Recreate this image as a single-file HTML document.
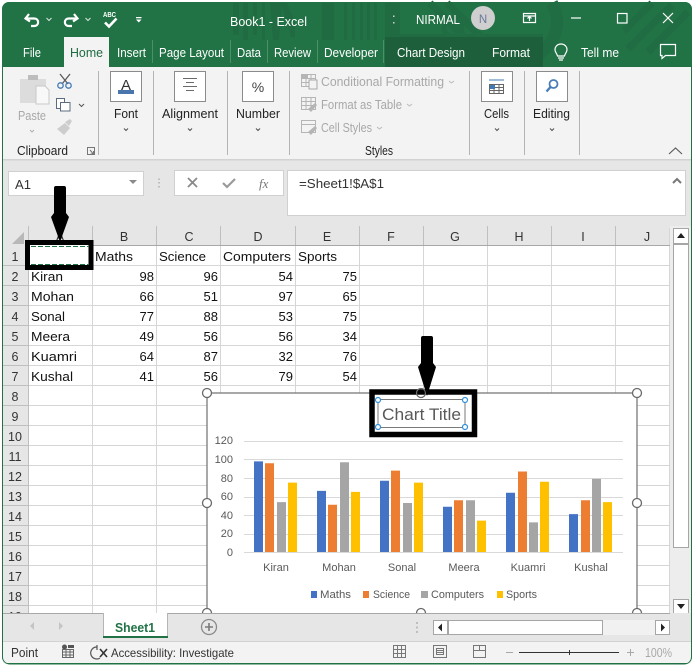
<!DOCTYPE html>
<html><head><meta charset="utf-8"><title>Book1 - Excel</title>
<style>
html,body{margin:0;padding:0;background:#fff;width:694px;height:668px;overflow:hidden}
svg{display:block}
text{font-family:"Liberation Sans",sans-serif;font-size:12.5px;fill:#222}
.w{fill:#fff;font-size:12.5px}
.dim{fill:#a8a8a8}
.c{font-size:13px;fill:#111}
.r{font-size:13px;fill:#111;text-anchor:end}
.h{font-size:12.5px;fill:#333;text-anchor:middle}
.ax{font-size:11px;fill:#595959;text-anchor:end}
.cat{font-size:11px;fill:#595959;text-anchor:middle}
.lg{font-size:11px;fill:#595959}
</style></head><body>
<svg width="694" height="668" viewBox="0 0 694 668" xmlns="http://www.w3.org/2000/svg">
<rect width="694" height="668" fill="#fff"/>
<!-- window -->
<rect x="2.500" y="2.500" width="689" height="661" rx="7" fill="#e6e6e6" stroke="#217346" stroke-width="1"/>
<path d="M2 67V9a7 7 0 0 1 7-7H685a7 7 0 0 1 7 7V67Z" fill="#217346"/>
<!-- title pattern -->
<g fill="#206b42">
<path d="M233 3h6v32h-6zM243 3h5v37h-5zM253 3h4v32h-4zM262 3h3v37h-3zM270 3h12l-3 37h-6zM322 3h12v37h-12zM344 3h3v37h-3zM352 3h3v37h-3zM360 3h3v37h-3zM367 3h3v37h-3zM374 3h3v37h-3zM281 3h6l8 20v14h-4z"/>
<path d="M385 3h15v34h-15zM400 34h143v3H400z"/>
</g>
<g fill="none" stroke="#206c43">
<circle cx="453" cy="28" r="9" stroke-width="5"/>
<path d="M552 3c16 30-8 60-48 62" stroke-width="12"/>
<path d="M430 3l60 60M447 3l60 60" stroke-width="7"/>
<path d="M672 5l-44 44M688 12l-40 40M652 3l-28 28" stroke-width="7"/>
</g>
<path d="M385 37h158v30H385z" fill="#1e5f3b"/>
<!-- QAT -->
<g fill="none" stroke="#fff" stroke-width="2.200">
<path d="M29 14l-3.500 4.500 4.500 3M26.500 18.500H34c5.500 0 5.500 7.500 0 7.500h-3"/>
<path d="M74 14l3.500 4.500-4.500 3M76.500 18.500H69c-5.500 0-5.500 7.500 0 7.500h3"/>
<path d="M105 22.500l4 4 7.500-8" stroke-width="2.600"/>
</g>
<g fill="none" stroke="#d9e6de" stroke-width="1"><path d="M46.500 18l2.500 2.500 2.500-2.500M85.500 18l2.500 2.500 2.500-2.500"/></g>
<text x="103" y="17" style="font-size:7.500px;font-weight:bold;fill:#fff" textLength="13" lengthAdjust="spacingAndGlyphs">ABC</text>
<path d="M136 17h5.500v1.200H136zM136 19.500h5.500l-2.750 3z" fill="#fff"/>
<text class="w" x="230" y="26" textLength="77" lengthAdjust="spacingAndGlyphs" style="font-size:13px">Book1 - Excel</text>
<path d="M393 15.500h1.500v1.500h-1.500zM393 22h1.500v1.500h-1.500z" fill="#cfcfcf"/>
<text class="w" x="416" y="24" textLength="44" lengthAdjust="spacingAndGlyphs" style="font-size:12.500px">NIRMAL</text>
<circle cx="483" cy="18" r="12" fill="#cfcfcf"/>
<text x="483" y="23" style="font-size:11.500px;fill:#6a7a9a;text-anchor:middle">N</text>
<g fill="none" stroke="#fff" stroke-width="1.200">
<path d="M523.500 13.500h12v9h-12zM523.500 16h12M529.500 21v-4M527.500 18.500l2-2 2 2"/>
<path d="M571 18h10"/>
<rect x="617.500" y="13.500" width="9.500" height="9.500"/>
<path d="M663 13l10 10M673 13l-10 10"/>
<path d="M561 44c-3.500 0-6 2.500-6 5.800 0 2.500 2 3.500 2.500 6.200h7c.5-2.700 2.500-3.700 2.500-6.200 0-3.300-2.500-5.800-6-5.800zM558 58h6M559 60h4"/>
<path d="M660.500 44.500h15v11h-10l-3.500 3v-3h-1.500z"/>
</g>
<!-- Tabs -->
<path d="M64 37h45v31H64z" fill="#f3f3f3"/>
<text class="w" x="23" y="57" textLength="18" lengthAdjust="spacingAndGlyphs">File</text>
<text x="70" y="57" textLength="33" lengthAdjust="spacingAndGlyphs" style="fill:#1e6b41;font-size:12.500px">Home</text>
<text class="w" x="117" y="57" textLength="29" lengthAdjust="spacingAndGlyphs">Insert</text>
<text class="w" x="159" y="57" textLength="65" lengthAdjust="spacingAndGlyphs">Page Layout</text>
<text class="w" x="237" y="57" textLength="24" lengthAdjust="spacingAndGlyphs">Data</text>
<text class="w" x="274" y="57" textLength="37" lengthAdjust="spacingAndGlyphs">Review</text>
<text class="w" x="324" y="57" textLength="54" lengthAdjust="spacingAndGlyphs">Developer</text>
<text class="w" x="397" y="57" textLength="68" lengthAdjust="spacingAndGlyphs">Chart Design</text>
<text class="w" x="492" y="57" textLength="38" lengthAdjust="spacingAndGlyphs">Format</text>
<text class="w" x="581" y="57" textLength="38" lengthAdjust="spacingAndGlyphs">Tell me</text>
<path d="M152.500 40v23M230.500 40v23M267.500 40v23M317.500 40v23M383.500 40v23" stroke="#4a9069" fill="none"/>
<!-- Ribbon -->
<rect x="3" y="67" width="688" height="92" fill="#f3f3f3"/>
<rect x="3" y="159" width="688" height="1.500" fill="#d2d2d2"/>
<path d="M98.500 71v84M153.500 71v84M227.500 71v84M289.500 71v84M469.500 71v84M524.500 71v84M579.500 71v84" stroke="#b4b4b4" fill="none"/>
<!-- clipboard -->
<path d="M20 79h26v24H20z" fill="#dcdcdc"/><path d="M28 75h10v5H28z" fill="#bdbdbd"/>
<path d="M36 86h9l4 4v14H36z" fill="#f8f8f8" stroke="#c8c8c8"/>
<g fill="none" stroke="#5b5b5b" stroke-width="1.300"><path d="M60 74l8 10M70 74l-8 10"/></g>
<g fill="none" stroke="#3f78b5" stroke-width="1.300"><circle cx="60.500" cy="85.500" r="2.700"/><circle cx="68.500" cy="85.500" r="2.700"/></g>
<g fill="#fff" stroke="#5c6c80"><path d="M56.500 98.500h8v10h-8z"/><path d="M60.500 102.500h9.500v8.500h-9.500z"/></g>
<path d="M79 104l2.500 2.500 2.500-2.500" fill="none" stroke="#555"/>
<path d="M57 129l8-6 5 5-6 7zM65 122l5-3 2 2-3 5z" fill="#cdcdcd"/>
<text class="dim" x="18" y="120" textLength="28" lengthAdjust="spacingAndGlyphs">Paste</text>
<path d="M30 130l2 2 2-2" fill="none" stroke="#b0b0b0"/>
<text x="17" y="155" textLength="51" lengthAdjust="spacingAndGlyphs">Clipboard</text>
<path d="M87.500 147.500h7v7h-7zM90 150l3 3.500M93.500 151v3h-3" fill="none" stroke="#777"/>
<!-- group buttons -->
<g fill="#fff" stroke="#8c8c8c"><rect x="110.500" y="71.500" width="31" height="30"/><rect x="174.500" y="71.500" width="31" height="30"/><rect x="242.500" y="71.500" width="31" height="30"/><rect x="481.500" y="71.500" width="31" height="30"/><rect x="536.500" y="71.500" width="31" height="30"/></g>
<text x="126" y="90" style="font-size:15px;text-anchor:middle;fill:#333">A</text>
<rect x="118" y="90" width="16" height="4" fill="#4a75ad"/>
<path d="M183 81.500h14M186 85.500h8M183 89.500h14M186 93.500h8" stroke="#6a6a6a" fill="none" transform="translate(0 -3)"/>
<text x="258" y="92" style="font-size:14px;text-anchor:middle;fill:#444">%</text>
<g fill="none" stroke="#666"><path d="M489.500 84.500h14v9h-14zM489.500 87.500h14M489.500 90.500h14M494 84.500v9M499 84.500v9"/><path d="M489 80h15" stroke="#3f78b5"/></g>
<rect x="490" y="85" width="5" height="4" fill="#3f78b5"/>
<circle cx="553.500" cy="84" r="4" fill="#fff" stroke="#4a7db8" stroke-width="1.800"/>
<path d="M550.500 87l-4 4.500" stroke="#4a7db8" stroke-width="2.400" fill="none"/>
<text x="114" y="118" textLength="24" lengthAdjust="spacingAndGlyphs">Font</text>
<text x="162" y="118" textLength="56" lengthAdjust="spacingAndGlyphs">Alignment</text>
<text x="236" y="118" textLength="44" lengthAdjust="spacingAndGlyphs">Number</text>
<text x="484" y="118" textLength="25" lengthAdjust="spacingAndGlyphs">Cells</text>
<text x="533" y="118" textLength="37" lengthAdjust="spacingAndGlyphs">Editing</text>
<path d="M124 128.500l2 2 2-2M188 128.500l2 2 2-2M256 128.500l2 2 2-2M495 128.500l2 2 2-2M550 128.500l2 2 2-2" fill="none" stroke="#555" stroke-width="1.100"/>
<!-- styles -->
<g fill="none" stroke="#b5b5b5">
<path d="M301.500 74.500h14v12h-14zM301.500 78.500h14M301.500 82.500h14M306 74.500v12M311 74.500v12"/>
<path d="M301.500 97.500h14v12h-14zM301.500 101.500h14M301.500 105.500h14M306 97.500v12M311 97.500v12"/>
<path d="M301.500 120.500h14v12h-14zM301.500 124.500h14"/>
</g>
<path d="M301 74h7v5h-7z" fill="#b5b5b5"/><path d="M309 80h8v9h-8z" fill="#f3f3f3" stroke="#a8a8a8"/>
<path d="M308 109l7-6 2 2-6 7zM308 132l7-6 2 2-6 7z" fill="#b5b5b5"/>
<text class="dim" x="321" y="86" textLength="123" lengthAdjust="spacingAndGlyphs">Conditional Formatting</text>
<text class="dim" x="321" y="109" textLength="81" lengthAdjust="spacingAndGlyphs">Format as Table</text>
<text class="dim" x="321" y="132" textLength="51" lengthAdjust="spacingAndGlyphs">Cell Styles</text>
<path d="M449 81l2.500 2 2.500-2M407 104l2.500 2 2.500-2M377 127l2.500 2 2.500-2" fill="none" stroke="#bbb"/>
<text x="365" y="155" textLength="28" lengthAdjust="spacingAndGlyphs">Styles</text>
<path d="M669 154l6.500-6 6.500 6" fill="none" stroke="#555" stroke-width="1.100"/>
<!-- formula bar -->
<rect x="8.500" y="171.500" width="135" height="24" fill="#fff" stroke="#d0d0d0"/>
<text x="15" y="189" textLength="16" lengthAdjust="spacingAndGlyphs" style="fill:#333">A1</text>
<path d="M129 180h8l-4 4z" fill="#8a8a8a"/>
<path d="M159 178.500v1.500M159 182v1.500M159 186v1.500" stroke="#b0b0b0" stroke-width="1.500" fill="none"/>
<rect x="174.500" y="170.500" width="109" height="25" fill="#fff" stroke="#d0d0d0"/>
<path d="M188 178l9 9M197 178l-9 9" stroke="#8a8a8a" stroke-width="1.800" fill="none"/>
<path d="M223 183l4 4 8-8" stroke="#9a9a9a" stroke-width="2.200" fill="none"/>
<text x="259" y="188" style="font-family:'Liberation Serif',serif;font-style:italic;font-size:13px;fill:#777">fx</text>
<rect x="287.500" y="170.500" width="398" height="45" fill="#fff" stroke="#d0d0d0"/>
<text x="299" y="188" textLength="85" lengthAdjust="spacingAndGlyphs" style="fill:#333">=Sheet1!$A$1</text>
<path d="M673 183l4-4 4 4" fill="none" stroke="#777" stroke-width="2"/>
<!-- grid -->
<rect x="3" y="225" width="667" height="388" fill="#e6e6e6"/>
<rect x="29" y="246" width="641" height="367" fill="#fff"/>
<path d="M12 244l12-12v12z" fill="#b8b8b8"/>
<g fill="none" stroke="#d6d6d6">
<path d="M92.500 246V613M156.500 246V613M220.500 246V613M295.500 246V613M359.500 246V613M423.500 246V613M487.500 246V613M551.500 246V613M615.500 246V613M669.500 228V613"/>
<path d="M29 265.500H670M29 285.500H670M29 305.500H670M29 325.500H670M29 345.500H670M29 365.500H670M29 385.500H670M29 405.500H670M29 425.500H670M29 445.500H670M29 465.500H670M29 485.500H670M29 505.500H670M29 525.500H670M29 545.500H670M29 565.500H670M29 585.500H670M29 605.500H670"/>
</g>
<g fill="none" stroke="#bfbfbf">
<path d="M28.500 226V613M92.500 226v19M156.500 226v19M220.500 226v19M295.500 226v19M359.500 226v19M423.500 226v19M487.500 226v19M551.500 226v19M615.500 226v19"/>
<path d="M3 265.500h25M3 285.500h25M3 305.500h25M3 325.500h25M3 345.500h25M3 365.500h25M3 385.500h25M3 405.500h25M3 425.500h25M3 445.500h25M3 465.500h25M3 485.500h25M3 505.500h25M3 525.500h25M3 545.500h25M3 565.500h25M3 585.500h25M3 605.500h25"/>
<path d="M29 245.500H670" stroke="#a8a8a8"/>
</g>
<text class="h" x="60" y="241">A</text><text class="h" x="124" y="241">B</text><text class="h" x="189" y="241">C</text><text class="h" x="258" y="241">D</text><text class="h" x="327" y="241">E</text><text class="h" x="391" y="241">F</text><text class="h" x="455" y="241">G</text><text class="h" x="519" y="241">H</text><text class="h" x="583" y="241">I</text><text class="h" x="647" y="241">J</text>
<text class="h" x="15" y="261">1</text><text class="h" x="15" y="281">2</text><text class="h" x="15" y="301">3</text><text class="h" x="15" y="321">4</text><text class="h" x="15" y="341">5</text><text class="h" x="15" y="361">6</text><text class="h" x="15" y="381">7</text><text class="h" x="15" y="401">8</text><text class="h" x="15" y="421">9</text><text class="h" x="15" y="441">10</text><text class="h" x="15" y="461">11</text><text class="h" x="15" y="481">12</text><text class="h" x="15" y="501">13</text><text class="h" x="15" y="521">14</text><text class="h" x="15" y="541">15</text><text class="h" x="15" y="561">16</text><text class="h" x="15" y="581">17</text><text class="h" x="15" y="601">18</text><text class="h" x="15" y="621">19</text>
<!-- cells -->
<g>
<text class="c" x="95" y="261" textLength="38" lengthAdjust="spacingAndGlyphs">Maths</text><text class="c" x="159" y="261" textLength="47" lengthAdjust="spacingAndGlyphs">Science</text><text class="c" x="223" y="261" textLength="68" lengthAdjust="spacingAndGlyphs">Computers</text><text class="c" x="298" y="261" textLength="39" lengthAdjust="spacingAndGlyphs">Sports</text>
<text class="c" x="31" y="281" textLength="32" lengthAdjust="spacingAndGlyphs">Kiran</text><text class="r" x="154" y="281">98</text><text class="r" x="218" y="281">96</text><text class="r" x="293" y="281">54</text><text class="r" x="357" y="281">75</text>
<text class="c" x="31" y="301" textLength="43" lengthAdjust="spacingAndGlyphs">Mohan</text><text class="r" x="154" y="301">66</text><text class="r" x="218" y="301">51</text><text class="r" x="293" y="301">97</text><text class="r" x="357" y="301">65</text>
<text class="c" x="31" y="321" textLength="34" lengthAdjust="spacingAndGlyphs">Sonal</text><text class="r" x="154" y="321">77</text><text class="r" x="218" y="321">88</text><text class="r" x="293" y="321">53</text><text class="r" x="357" y="321">75</text>
<text class="c" x="31" y="341" textLength="39" lengthAdjust="spacingAndGlyphs">Meera</text><text class="r" x="154" y="341">49</text><text class="r" x="218" y="341">56</text><text class="r" x="293" y="341">56</text><text class="r" x="357" y="341">34</text>
<text class="c" x="31" y="361" textLength="46" lengthAdjust="spacingAndGlyphs">Kuamri</text><text class="r" x="154" y="361">64</text><text class="r" x="218" y="361">87</text><text class="r" x="293" y="361">32</text><text class="r" x="357" y="361">76</text>
<text class="c" x="31" y="381" textLength="42" lengthAdjust="spacingAndGlyphs">Kushal</text><text class="r" x="154" y="381">41</text><text class="r" x="218" y="381">56</text><text class="r" x="293" y="381">79</text><text class="r" x="357" y="381">54</text>
</g>
<!-- chart -->
<rect x="207" y="393" width="430" height="225" fill="#fff" stroke="#6e6e6e" stroke-width="1.200"/>
<path d="M244 441.500H623M244 459.500H623M244 478.500H623M244 497.500H623M244 515.500H623M244 534.500H623M244 552.500H623" stroke="#d9d9d9" fill="none"/>
<path fill="#4472c4" d="M254 461.400h9V552h-9zM317 490.900h9V552h-9zM380 480.800h9V552h-9zM443 506.700h9V552h-9zM506 492.800h9V552h-9zM569 514.100h9V552h-9z"/>
<path fill="#ed7d31" d="M265 463.200h9V552h-9zM328 504.800h9V552h-9zM391 470.600h9V552h-9zM454 500.200h9V552h-9zM518 471.500h9V552h-9zM581 500.200h9V552h-9z"/>
<path fill="#a5a5a5" d="M277 502.100h9V552h-9zM340 462.300h9V552h-9zM403 503h9V552h-9zM466 500.200h9V552h-9zM529 522.400h9V552h-9zM592 478.900h9V552h-9z"/>
<path fill="#ffc000" d="M288 482.600h9V552h-9zM351 491.900h9V552h-9zM414 482.600h9V552h-9zM477 520.600h9V552h-9zM540 481.700h9V552h-9zM603 502.100h9V552h-9z"/>
<text class="ax" x="233" y="444">120</text><text class="ax" x="233" y="463">100</text><text class="ax" x="233" y="482">80</text><text class="ax" x="233" y="500">60</text><text class="ax" x="233" y="519">40</text><text class="ax" x="233" y="537">20</text><text class="ax" x="233" y="556">0</text>
<text class="cat" x="276" y="571">Kiran</text><text class="cat" x="339" y="571">Mohan</text><text class="cat" x="402" y="571">Sonal</text><text class="cat" x="464" y="571">Meera</text><text class="cat" x="528" y="571">Kuamri</text><text class="cat" x="591" y="571">Kushal</text>
<rect x="311" y="591" width="6" height="7" fill="#4472c4"/><text class="lg" x="320" y="598" textLength="31" lengthAdjust="spacingAndGlyphs">Maths</text>
<rect x="363" y="591" width="6" height="7" fill="#ed7d31"/><text class="lg" x="373" y="598" textLength="37" lengthAdjust="spacingAndGlyphs">Science</text>
<rect x="421" y="591" width="7" height="7" fill="#a5a5a5"/><text class="lg" x="431" y="598" textLength="53" lengthAdjust="spacingAndGlyphs">Computers</text>
<rect x="497" y="591" width="6" height="7" fill="#ffc000"/><text class="lg" x="506" y="598" textLength="31" lengthAdjust="spacingAndGlyphs">Sports</text>
<!-- black box title -->
<rect x="372" y="392" width="102.500" height="42.500" fill="#fff" stroke="#000" stroke-width="5.500"/>
<rect x="378" y="399.500" width="87" height="28" fill="none" stroke="#7a7a7a"/>
<text x="382" y="420" textLength="79" lengthAdjust="spacingAndGlyphs" style="font-size:17px;fill:#595959">Chart Title</text>
<g fill="#fff" stroke="#2f8fdf" stroke-width="1.200"><circle cx="378" cy="400" r="2.500"/><circle cx="465" cy="400" r="2.500"/><circle cx="378" cy="427" r="2.500"/><circle cx="465" cy="427" r="2.500"/></g>
<!-- handles -->
<g fill="#fff" stroke="#6a6a6a" stroke-width="1.300">
<circle cx="207" cy="393" r="4.500"/><circle cx="637" cy="393" r="4.500"/><circle cx="207" cy="503" r="4.500"/><circle cx="637" cy="503" r="4.500"/><circle cx="207" cy="613" r="4.500"/><circle cx="421" cy="613" r="4.500"/><circle cx="637" cy="613" r="4.500"/>
<circle cx="421" cy="393" r="4.500" fill="none"/>
</g>
<!-- A1 box -->
<rect x="27.500" y="242.500" width="63.500" height="25" fill="#fff" stroke="#000" stroke-width="5"/>
<path d="M31 246.500H89M31 264.500H89" stroke="#217346" stroke-dasharray="5 2" fill="none"/>
<!-- arrows -->
<path d="M54 188q0-2 2-2h8q2 0 2 2v25l3 4-9 25-9-25 3-4z" fill="#000"/>
<path d="M421 338q0-2 2-2h8q2 0 2 2v25l3 4-9 29-9-29 3-4z" fill="#000"/>
<!-- vertical scrollbar -->
<rect x="670" y="226" width="21" height="387" fill="#ededed"/>
<g fill="#fff" stroke="#a6a6a6" stroke-width="1"><rect x="673.500" y="228.500" width="15" height="15"/><rect x="673.500" y="244.500" width="15" height="303"/><rect x="673.500" y="599.500" width="15" height="14"/></g>
<path d="M677 238h8l-4-5zM677 604h8l-4 5z" fill="#222"/>
<!-- tab bar -->
<rect x="3" y="613" width="688" height="28" fill="#e6e6e6"/>
<path d="M3 613.500H103M167 613.500H670" stroke="#a8a8a8" fill="none"/>
<path d="M103.500 613h64v24h-64z" fill="#fff"/>
<path d="M103.500 613v24M167.500 613v24" stroke="#b5b5b5" fill="none"/>
<rect x="103" y="636" width="65" height="2" fill="#217346"/>
<text x="115" y="632" textLength="40" lengthAdjust="spacingAndGlyphs" style="font-weight:bold;font-size:13px;fill:#217346">Sheet1</text>
<path d="M34 622v8l-4-4zM59 622v8l4-4z" fill="#c4c4c4"/>
<circle cx="209" cy="627" r="7.500" fill="none" stroke="#8a8a8a" stroke-width="1.300"/>
<path d="M205 627h8M209 623v8" stroke="#7a7a7a" stroke-width="1.600" fill="none"/>
<path d="M417 622v2M417 626.500v2M417 631v2" stroke="#b0b0b0" stroke-width="1.500" fill="none"/>
<rect x="433" y="620" width="237" height="15" fill="#f1f1f1"/>
<g fill="#fff" stroke="#a6a6a6" stroke-width="1"><rect x="433.500" y="620.500" width="14" height="14"/><rect x="448.500" y="620.500" width="154" height="14"/><rect x="655.500" y="620.500" width="14" height="14"/></g>
<path d="M442 623.500v8l-4-4zM661 623.500v8l4-4z" fill="#222"/>
<!-- status bar -->
<rect x="3" y="641" width="688" height="22" fill="#f3f3f3"/>
<rect x="3" y="641" width="688" height="1" fill="#d2d2d2"/>
<path d="M2.500 656v1a7 7 0 0 0 7 7H684.500a7 7 0 0 0 7-7v-1" fill="none" stroke="#217346" stroke-width="1"/>
<text x="11" y="657" textLength="27" lengthAdjust="spacingAndGlyphs" style="fill:#333">Point</text>
<circle cx="64.500" cy="647" r="2.500" fill="#555"/>
<path d="M68 645h6v3h-6z" fill="#555"/><path d="M62.500 649.500h11v8h-11zM62.500 652h11M62.500 655h11M66 650v7M70 650v7" fill="none" stroke="#666"/>
<path d="M97 647a6 6 0 1 0 3 11M97 645v5" fill="none" stroke="#555" stroke-width="1.200"/>
<path d="M100 649l7 8M107 649l-7 8" stroke="#333" stroke-width="1.600" fill="none"/>
<text x="111" y="657" textLength="123" lengthAdjust="spacingAndGlyphs" style="fill:#333;font-size:12px">Accessibility: Investigate</text>
<g fill="none" stroke="#777">
<path d="M393.500 645.500h12v12h-12zM393.500 649.500h12M393.500 653.500h12M397.500 645.500v12M401.500 645.500v12"/>
<path d="M433.500 645.500h13v12h-13zM436.500 648.500h7v6h-7zM436.500 650.500h7M436.500 652.500h7"/>
<path d="M473.500 645.500h12v12h-12zM473.500 650.500h12M479.500 645.500v5"/>
</g>
<path d="M506 652.500h7M627 652.500h7M630.500 649v7" stroke="#a8a8a8" fill="none"/>
<path d="M519 652.500h100" stroke="#333" fill="none"/><path d="M569.500 650v5" stroke="#333" fill="none"/>
<text x="645" y="657" textLength="27" lengthAdjust="spacingAndGlyphs" style="fill:#a8a8a8">100%</text>
<!-- side border -->
<path d="M691.500 67V656M2.500 67V656" stroke="#217346" stroke-width="1" fill="none"/>
</svg>
</body></html>
